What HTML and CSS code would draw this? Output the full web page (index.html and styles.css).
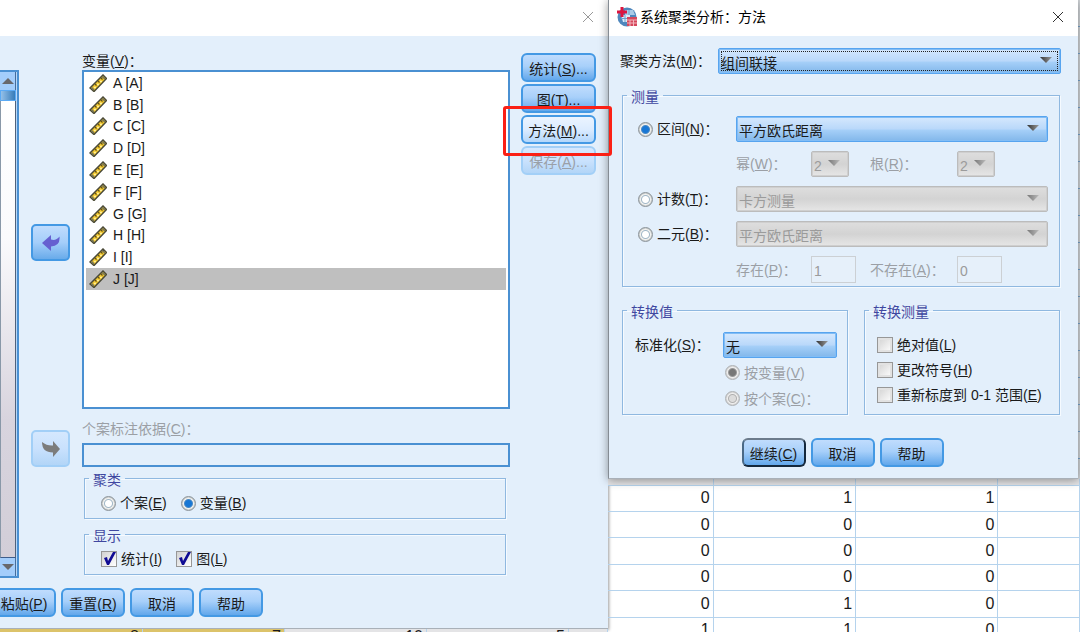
FILE: index.html
```html
<!DOCTYPE html>
<html lang="zh-CN">
<head>
    <meta charset="UTF-8">
    <meta name="viewport" content="width=device-width, initial-scale=1.0">
    <title>系统聚类分析：方法</title>
    <link rel="stylesheet" href="styles.css">
</head>
<body>
    <svg class="defs" width="0" height="0" aria-hidden="true">
        <symbol id="ruler" viewBox="0 0 18 18">
            <path d="M1 14 L14 1 L17.500 4.500 L5 17.500 Z" fill="#f0c62c" stroke="#4b4a38" stroke-width="1.500"/>
            <path d="M2.500 13.500 L5 16 M13 2.500 L16 5" stroke="#75755a" stroke-width="1.500"/>
            <path d="M6 10 l1.500 1.500 M9 7 l1.500 1.500 M12 4 l1.500 1.500" stroke="#62511b" stroke-width="1.200"/>
            <path d="M5 13.500 h2 M8 10.500 h2 M11 7.500 h2" stroke="#fff09a" stroke-width="1.500"/>
        </symbol>
        <symbol id="close" viewBox="0 0 12 12">
            <path d="M1 1 L11 11 M11 1 L1 11" fill="none" stroke="currentColor" stroke-width="1"/>
        </symbol>
    </svg>

    <div class="desktop">
        <!-- Hierarchical cluster window -->
        <div class="back">
            <section class="window">
                <header class="titlebar">
                    <button class="close muted" aria-label="关闭"><svg><use href="#close"/></svg></button>
                </header>
                <div class="window-body">
                    <div class="source">
                        <button class="scroll-btn up" aria-label="向上"></button>
                        <div class="thumb"></div>
                        <div class="track"></div>
                        <button class="scroll-btn down" aria-label="向下"></button>
                    </div>

                    <button class="arrow arrow-vars" aria-label="移回">
                        <svg viewBox="0 0 18 16"><path d="M0 8 L9 0 V4.500 Q14 6 17.500 1.500 Q18.500 11 9 11.500 V16 Z" fill="#6660d0"/></svg>
                    </button>
                    <div class="vars">
                        <span class="label" id="vars-label">变量(<u>V</u>)：</span>
                        <div class="listbox">
                            <ul class="items" role="listbox" aria-labelledby="vars-label">
                                <li role="option"><svg><use href="#ruler"/></svg>A [A]</li>
                                <li role="option"><svg><use href="#ruler"/></svg>B [B]</li>
                                <li role="option"><svg><use href="#ruler"/></svg>C [C]</li>
                                <li role="option"><svg><use href="#ruler"/></svg>D [D]</li>
                                <li role="option"><svg><use href="#ruler"/></svg>E [E]</li>
                                <li role="option"><svg><use href="#ruler"/></svg>F [F]</li>
                                <li role="option"><svg><use href="#ruler"/></svg>G [G]</li>
                                <li role="option"><svg><use href="#ruler"/></svg>H [H]</li>
                                <li role="option"><svg><use href="#ruler"/></svg>I [I]</li>
                                <li role="option" class="selected" aria-selected="true"><svg><use href="#ruler"/></svg>J [J]</li>
                            </ul>
                        </div>
                    </div>

                    <button class="arrow arrow-case" disabled aria-label="移入">
                        <svg viewBox="0 0 18 16"><path d="M18 8 L11 0 V4.500 Q5 5 0 1 Q0 11.500 11 11.500 V16 Z" fill="#7c7c7c"/></svg>
                    </button>
                    <div class="case">
                        <label class="label off" for="case-by">个案标注依据(<u>C</u>)：</label>
                        <input class="case-input" id="case-by" type="text" disabled>
                    </div>

                    <div class="groups">
                        <fieldset>
                            <legend>聚类</legend>
                            <div class="options">
                                <label><input type="radio" name="cluster"><span>个案(<u>E</u>)</span></label>
                                <label><input type="radio" name="cluster" checked><span>变量(<u>B</u>)</span></label>
                            </div>
                        </fieldset>
                        <fieldset>
                            <legend>显示</legend>
                            <div class="options">
                                <label><input type="checkbox" checked><span>统计(<u>I</u>)</span></label>
                                <label><input type="checkbox" checked><span>图(<u>L</u>)</span></label>
                            </div>
                        </fieldset>
                    </div>

                    <div class="side">
                        <button class="btn">统计(<u>S</u>)...</button>
                        <button class="btn">图(<u>T</u>)...</button>
                        <div class="marked">
                            <button class="btn hover">方法(<u>M</u>)...</button>
                            <span class="marker"></span>
                        </div>
                        <button class="btn" disabled>保存(<u>A</u>)...</button>
                    </div>
                </div>
                <footer class="footer">
                    <button class="btn">粘贴(<u>P</u>)</button>
                    <button class="btn">重置(<u>R</u>)</button>
                    <button class="btn">取消</button>
                    <button class="btn">帮助</button>
                </footer>
            </section>
            <div class="peek">
                <span class="hl">8</span><span class="hl">7</span><span>10</span><span>5</span><span></span>
            </div>
        </div>

        <!-- Method dialog -->
        <section class="dialog">
            <header class="titlebar">
                <svg class="logo" viewBox="0 0 20 20">
                    <circle cx="10" cy="10" r="9.500" fill="#4f87bd"/>
                    <path d="M8 3 H16 L18 8 H8 Z" fill="#a9cbe8"/>
                    <path d="M4 8 H13 V15 H6 Z" fill="#dcebf7"/>
                    <path d="M4 11.500 H12 M8 8 V15 M12 3 V8" stroke="#6d9fce" stroke-width="1"/>
                    <path d="M5 0 V10 M0 5 H10" stroke="#dc143f" stroke-width="3"/>
                    <path d="M10 10 H20 V19 H10 Z" fill="#d5475c"/>
                    <path d="M10 13 H20 M10 16 H20 M13 13 V19 M16.500 13 V19" stroke="#f2b6bd" stroke-width="1"/>
                </svg>
                <h1>系统聚类分析：方法</h1>
                <button class="close" aria-label="关闭"><svg><use href="#close"/></svg></button>
            </header>
            <div class="dialog-body">
                <div class="method">
                    <label for="method">聚类方法(<u>M</u>)：</label>
                    <div class="focus">
                        <select id="method"><option>组间联接</option></select>
                    </div>
                </div>

                <fieldset class="measure">
                    <legend>测量</legend>
                    <div class="measure-grid">
                        <label><input type="radio" name="measure" checked><span>区间(<u>N</u>)：</span></label>
                        <select aria-label="区间"><option>平方欧氏距离</option></select>
                        <div class="sub">
                            <label class="off" for="power">幂(<u>W</u>)：</label>
                            <select class="small" id="power" disabled><option>2</option></select>
                            <label class="off" for="root">根(<u>R</u>)：</label>
                            <select class="small" id="root" disabled><option>2</option></select>
                        </div>
                        <label><input type="radio" name="measure"><span>计数(<u>T</u>)：</span></label>
                        <select aria-label="计数" disabled><option>卡方测量</option></select>
                        <label><input type="radio" name="measure"><span>二元(<u>B</u>)：</span></label>
                        <select aria-label="二元" disabled><option>平方欧氏距离</option></select>
                        <div class="sub">
                            <label class="off" for="present">存在(<u>P</u>)：</label>
                            <input class="num" id="present" type="text" value="1" disabled>
                            <label class="off" for="absent">不存在(<u>A</u>)：</label>
                            <input class="num" id="absent" type="text" value="0" disabled>
                        </div>
                    </div>
                </fieldset>

                <div class="transforms">
                    <fieldset>
                        <legend>转换值</legend>
                        <div class="values">
                            <label for="standardize">标准化(<u>S</u>)：</label>
                            <select id="standardize"><option>无</option></select>
                            <label class="by off"><input type="radio" name="by" checked disabled><span>按变量(<u>V</u>)</span></label>
                            <label class="by off"><input type="radio" name="by" disabled><span>按个案(<u>C</u>)：</span></label>
                        </div>
                    </fieldset>
                    <fieldset>
                        <legend>转换测量</legend>
                        <div class="checks">
                            <label><input type="checkbox"><span>绝对值(<u>L</u>)</span></label>
                            <label><input type="checkbox"><span>更改符号(<u>H</u>)</span></label>
                            <label><input type="checkbox"><span>重新标度到 0-1 范围(<u>E</u>)</span></label>
                        </div>
                    </fieldset>
                </div>

                <div class="actions">
                    <button class="btn default">继续(<u>C</u>)</button>
                    <button class="btn">取消</button>
                    <button class="btn">帮助</button>
                </div>
            </div>
        </section>
        <div class="edge"></div>

        <!-- Data sheet behind the windows -->
        <div class="sheet">
            <table>
                <colgroup><col class="c1"><col class="c2"><col class="c2"><col></colgroup>
                <tbody>
                    <tr class="stub"><td></td><td></td><td></td><td></td></tr>
                    <tr><td>0</td><td>1</td><td>1</td><td></td></tr>
                    <tr><td>0</td><td>0</td><td>0</td><td></td></tr>
                    <tr><td>0</td><td>0</td><td>0</td><td></td></tr>
                    <tr><td>0</td><td>0</td><td>0</td><td></td></tr>
                    <tr><td>0</td><td>1</td><td>0</td><td></td></tr>
                    <tr><td>1</td><td>1</td><td>0</td><td></td></tr>
                </tbody>
            </table>
        </div>
    </div>
</body>
</html>
```
FILE: styles.css
```css
* {
    box-sizing: border-box;
}

body {
    margin: 0;
    font-family: "Liberation Sans", "Noto Sans CJK SC", sans-serif;
    font-size: 14px;
    line-height: 20px;
    color: #1a1a1a;
    background: #fff;
}

button, input, select {
    font: inherit;
    color: inherit;
    margin: 0;
}

.defs {
    position: absolute;
}

.desktop {
    display: grid;
    grid-template-columns: 608fr 470fr 2px;
    grid-template-rows: auto minmax(0, 1fr);
    height: 100vh;
    overflow: hidden;
}

/* Windows */
.back {
    grid-row: 1 / 3;
    display: flex;
    flex-direction: column;
    min-width: 0;
}

.window {
    flex: 1;
    display: flex;
    flex-direction: column;
    background: #e3effb;
    border-bottom: 1px solid #a9b0b8;
    box-shadow: 1px 1px 3px rgba(0, 0, 0, 0.4);
}

.dialog {
    position: relative;
    z-index: 1;
    min-width: 0;
    background: #e3effb;
    border-left: 1px solid #858c94;
    border-bottom: 1px solid #a9b0b8;
    box-shadow: 0 1px 9px rgba(0, 0, 0, 0.4);
}

.titlebar {
    display: flex;
    align-items: center;
    gap: 3px;
    height: 36px;
    padding: 0 14px 2px 8px;
    background: #fff;
}

.titlebar h1 {
    margin: 0;
    font-size: 14px;
    font-weight: normal;
    color: #000;
}

.logo {
    width: 20px;
    height: 20px;
}

.close {
    display: flex;
    margin-left: auto;
    padding: 0;
    border: none;
    background: none;
    color: #333;
}

.close svg {
    width: 12px;
    height: 12px;
}

.close.muted {
    color: #999;
}

.window-body {
    flex: 1;
    display: grid;
    grid-template-columns: 19px 39px minmax(0, 1fr) 74px;
    grid-template-rows: 1fr auto auto;
    column-gap: 12px;
    padding: 16px 12px 0 0;
}

.off {
    color: #9b9fa5;
}

.label {
    display: block;
}

/* Source list, mostly off the left edge */
.source {
    grid-row: 1 / 4;
    display: flex;
    flex-direction: column;
    margin-top: 18px;
    padding-right: 1px;
    border: 2px solid #4a90d2;
    border-left: none;
    background: #b8d8f8;
}

.scroll-btn {
    height: 18px;
    padding: 0;
    border: none;
    border-right: 1px solid #456d9c;
    background: #a3cdfb;
    display: flex;
    align-items: center;
    justify-content: center;
}

.scroll-btn::before {
    content: "";
    border: 6px solid transparent;
}

.scroll-btn.up::before {
    border-top: none;
    border-bottom-color: #68686c;
}

.scroll-btn.down::before {
    border-bottom: none;
    border-top-color: #68686c;
}

.thumb {
    height: 11px;
    border: 1px solid #5baaf4;
    background: linear-gradient(to right, #94c0e8, #377cb9);
}

.track {
    flex: 1;
    border-left: 1px solid #8998a8;
    border-right: 1px solid #4f627c;
    border-bottom: 1px solid #3d5d8c;
    background: linear-gradient(#fff, #fafafc 30%, #d8d4de 70%, #d2ced8);
}

/* Arrow buttons */
.arrow {
    grid-column: 2;
    display: flex;
    align-items: center;
    justify-content: center;
    height: 37px;
    padding: 0;
    border: 2px solid #4499e4;
    border-radius: 5px;
    background: linear-gradient(#c0dcfd, #a4cefa 50%, #69abea);
}

.arrow svg {
    width: 18px;
    height: 16px;
}

.arrow:disabled {
    border-color: #a2cff7;
    background: linear-gradient(#d5e8fe, #c9e1fd 50%, #b2d5f7);
}

.arrow-vars {
    align-self: center;
    margin-top: 24px;
}

.arrow-case {
    align-self: end;
}

.vars {
    grid-column: 3;
    display: flex;
    flex-direction: column;
}

.vars .label {
    line-height: 18px;
}

.listbox {
    flex: 1;
    padding: 0 2px;
    border: 2px solid #4a90d2;
    background: #fff;
}

.items {
    display: grid;
    grid-auto-rows: 1fr;
    height: 218px;
    margin: 0;
    padding: 0;
    list-style: none;
}

.items li {
    display: flex;
    align-items: center;
    gap: 6px;
    padding-left: 3px;
}

.items svg {
    width: 18px;
    height: 18px;
}

.items .selected {
    background: #bfbfbf;
}

.case {
    grid-column: 3;
    padding-top: 10px;
}

.case-input {
    display: block;
    width: 100%;
    height: 24px;
    margin-top: 4px;
    border: 2px solid #4a90d2;
    background: #e3effb;
}

.side {
    grid-column: 4;
    grid-row: 1;
    display: flex;
    flex-direction: column;
    gap: 2px;
    margin-left: -1px;
    padding-top: 1px;
}

.marked {
    position: relative;
    display: grid;
}

.marker {
    position: absolute;
    z-index: 2;
    inset: -9px -16px -12px -18px;
    border: 3px solid #fb2015;
    border-radius: 3px;
    pointer-events: none;
}

/* Buttons */
.btn {
    height: 29px;
    padding: 3px 0 0;
    border: 2px solid #4499e4;
    border-radius: 6px;
    background: linear-gradient(#c0dcfd, #a8d0fa 45%, #62a7eb);
    line-height: 20px;
    white-space: nowrap;
}

.btn.hover {
    background: linear-gradient(#ebf4ff, #dcecff 50%, #b3d7fb);
}

.btn.default {
    border-color: #6c7b8b #14283c #14283c #4a6986;
}

.btn:disabled {
    border-color: #a2cff7;
    background: linear-gradient(#d5e8fe, #cae2fd 50%, #b2d5f7);
    color: #9aa0a8;
}

.footer, .actions {
    display: flex;
    gap: 5px;
}

.footer .btn, .actions .btn {
    width: 64px;
}

.footer {
    margin-left: -8px;
    padding: 10px 0 11px;
}

/* Group boxes */
fieldset {
    min-width: 0;
    margin: 0;
    padding: 0 5px 0 4px;
    border: 1px solid #8fb8e0;
    box-shadow: 1px 1px 0 #f5faff, inset 1px 1px 0 #f5faff;
}

legend {
    padding: 4px 4px 0;
    line-height: 18px;
    color: #3f47a0;
}

.groups {
    grid-column: 3;
    display: grid;
    gap: 4px;
    padding: 0 4px 3px 2px;
}

.options {
    display: flex;
    gap: 14px;
    padding: 4px 12px 5px;
}

label:has(input) {
    display: flex;
    align-items: center;
    gap: 4px;
}

input[type="radio"] {
    appearance: none;
    flex: none;
    width: 15px;
    height: 15px;
    border: 1px solid #8c949a;
    border-radius: 50%;
    background: radial-gradient(circle, #fff 0 3px, #a2b8c8 4px, #f2f2f0 5px, #b3b8b8 7px);
}

input[type="radio"]:checked {
    background: radial-gradient(circle, #1877d5 0 3px, #4a8ac6 4px, #f2f2f0 5px, #b3b8b8 7px);
}

input[type="radio"]:disabled {
    border-color: #afb2b5;
    background: radial-gradient(circle, #dcdcdc 0 3px, #b0b0b0 4px, #eee 5px, #c4c4c4 7px);
}

input[type="radio"]:checked:disabled {
    background: radial-gradient(circle, #777 0 3px, #999 4px, #eee 5px, #c4c4c4 7px);
}

input[type="checkbox"] {
    appearance: none;
    flex: none;
    width: 16px;
    height: 16px;
    border: 1px solid #979797;
    background: linear-gradient(135deg, #d2d2d2, #fff);
    box-shadow: inset 0 0 0 2px #e2e2e2;
}

input[type="checkbox"]:checked {
    background: url("data:image/svg+xml,%3Csvg xmlns='http://www.w3.org/2000/svg' viewBox='0 0 14 14'%3E%3Cpath d='M2 6 L5 5 L6 9 L11 0 L14 0 L7 13 L5 13 Z' fill='%23100c94'/%3E%3C/svg%3E") center / 14px, linear-gradient(135deg, #d2d2d2, #fff);
    box-shadow: none;
}

/* Drop-downs */
select {
    appearance: none;
    width: 100%;
    height: 26px;
    padding: 3px 20px 0 2px;
    border: 1px solid #57a4ef;
    border-radius: 2px;
    outline: none;
    background: url("data:image/svg+xml,%3Csvg xmlns='http://www.w3.org/2000/svg' viewBox='0 0 12 6'%3E%3Cdefs%3E%3ClinearGradient id='g'%3E%3Cstop stop-color='%23333'/%3E%3Cstop offset='1' stop-color='%23999'/%3E%3C/linearGradient%3E%3C/defs%3E%3Cpath d='M0 0 H12 L6 6 Z' fill='url(%23g)'/%3E%3C/svg%3E") right 8px top 8px / 12px 6px no-repeat, linear-gradient(#d6e8fd, #b9d8fa 50%, #a5cff8 55%, #82b7ea);
    box-shadow: inset 0 0 0 1px #82bdf5;
}

select:disabled {
    opacity: 1;
    border-color: #bcbcbc;
    color: #9b9b9b;
    background: url("data:image/svg+xml,%3Csvg xmlns='http://www.w3.org/2000/svg' viewBox='0 0 12 6'%3E%3Cdefs%3E%3ClinearGradient id='g'%3E%3Cstop stop-color='%23777'/%3E%3Cstop offset='1' stop-color='%23bbb'/%3E%3C/linearGradient%3E%3C/defs%3E%3Cpath d='M0 0 H12 L6 6 Z' fill='url(%23g)'/%3E%3C/svg%3E") right 8px top 8px / 12px 6px no-repeat, linear-gradient(#dedede, #d3d3d3 50%, #e6e6e6);
    box-shadow: inset 0 0 0 1px #cfcfcf;
}

.num {
    width: 45px;
    height: 27px;
    padding: 2px 2px 0;
    border: 1px solid #ccd0d4;
    background: #e6f0fa;
    color: #9b9b9b;
}

/* Method dialog */
.dialog-body {
    padding: 12px 17px 11px 11px;
}

.method {
    display: grid;
    grid-template-columns: 98px minmax(0, 1fr);
    align-items: center;
}

.focus {
    position: relative;
    display: grid;
}

/* dotted focus ring drawn inside the control */
.focus::after {
    content: "";
    position: absolute;
    inset: 3px;
    border: 1px dotted #222;
    pointer-events: none;
}

.measure {
    margin: 10px 1px 0 2px;
}

.measure-grid {
    display: grid;
    grid-template-columns: 98px minmax(0, 1fr);
    gap: 9px 0;
    align-items: center;
    padding: 10px 6px 3px 11px;
}

.sub {
    grid-column: 2;
    display: grid;
    grid-template-columns: 75px 59px 87px 1fr;
    align-items: center;
}

.small {
    width: 38px;
    padding-right: 0;
}

.transforms {
    display: grid;
    grid-template-columns: 226fr 196fr;
    gap: 16px;
    margin: 12px 1px 0 2px;
}

.values {
    display: grid;
    grid-template-columns: 88px minmax(0, 1fr);
    align-items: center;
    row-gap: 3px;
    padding: 11px 5px 4px 8px;
}

.values .by {
    grid-column: 2;
    height: 23px;
    padding-left: 2px;
}

.checks {
    display: grid;
    gap: 5px;
    padding: 14px 0 0 8px;
    white-space: nowrap;
}

.actions {
    justify-content: center;
    margin-top: 23px;
    padding-left: 4px;
}

/* Sheet */
.sheet {
    grid-column: 2 / 4;
    overflow: hidden;
}

.sheet table {
    width: 100%;
    height: 165px;
    table-layout: fixed;
    border-collapse: collapse;
    font-size: 16px;
}

.c1 {
    width: 22.3%;
}

.c2 {
    width: 30.2%;
}

.sheet td {
    padding: 0 3px;
    border: 1px solid #b5d3ed;
    border-left: none;
    text-align: right;
}

.sheet .stub td {
    height: 6px;
    border-top: none;
    background: #e4e4e6;
}

.edge {
    background: repeating-linear-gradient(#d4d8dc 0 26px, #7ba7d0 26px 27px);
}

/* Row of the sheet that shows under the first window */
.peek {
    display: grid;
    grid-template-columns: 143fr 142fr 142fr 142fr 39fr;
    height: 3px;
    overflow: hidden;
    background: #e4e4e6;
    font-size: 16px;
    line-height: 16px;
    text-align: right;
}

.peek span {
    padding-right: 3px;
    border-right: 1px solid #b5d3ed;
}

.peek .hl {
    background: #dcc36a;
}
```
